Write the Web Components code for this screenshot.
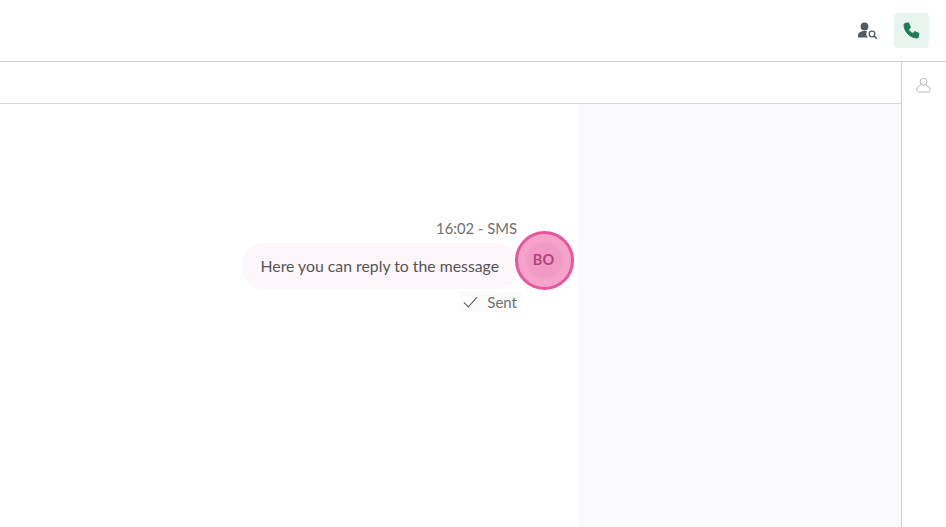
<!DOCTYPE html>
<html><head><meta charset="utf-8"><style>
html,body{margin:0;height:100%;background:#fff;overflow:hidden}
body{font-family:Lato,"Open Sans",sans-serif;color:#555}
</style></head><body>
<app-shell></app-shell>
<script>
const def=(name,html)=>{customElements.define(name,class extends HTMLElement{constructor(){super();this.attachShadow({mode:'open'}).innerHTML=html;}});};
def('top-bar',`<style>
:host{display:flex;align-items:center;justify-content:flex-end;height:62px;box-sizing:border-box;border-bottom:1px solid #d0d0d0;background:#fff;padding:0 17px 0 0;gap:16px}
.find{width:20px;height:18px;display:block}
.call{width:35px;height:35px;border-radius:4px;background:#e8f5ee;display:flex;align-items:center;justify-content:center}
</style>
<svg class="find" viewBox="0 0 20 18"><circle cx="6.500" cy="4.500" r="3.900" fill="#555a60"/><path d="M0 15.500v-2C0 10.500 3 9 6.500 9c1 0 1.800.1 2.600.3A4.800 4.800 0 0 0 10 15.500z" fill="#555a60"/><circle cx="14" cy="12" r="2.800" fill="#fff" stroke="#555a60" stroke-width="1.300"/><path d="M16 14l2.800 2.600" stroke="#555a60" stroke-width="1.500"/></svg>
<div class="call"><svg width="17" height="17" viewBox="0 0 17 17"><path d="M2 1.500 5.500.8 7.500 5.500 5.500 7.200C6.500 9.300 7.800 10.600 10 11.500L11.700 9.500 16 11.500 15.300 15C15.200 15.700 14.700 16 14 16 6.500 15.700 1.300 9.500 1 3 1 2.300 1.400 1.700 2 1.500z" fill="#1f7a54" stroke="#1f7a54" stroke-linejoin="round"/></svg></div>`);
def('sub-bar',`<style>:host{display:block;height:42px;box-sizing:border-box;border-bottom:1px solid #d6d6d6;background:#fff}</style>`);
def('side-rail',`<style>
:host{display:flex;flex-direction:column;align-items:center;width:45px;box-sizing:border-box;border-left:1px solid #d0d0d0;background:#fff;padding:15px 1px 0 0}
svg{display:block}
</style>
<svg width="15" height="16" viewBox="0 0 16 17" fill="none" stroke="#b4b4b4" stroke-width="1"><circle cx="8" cy="5" r="3.600"/><path d="M5.500 8.500C3 9.500 1 11 1 13.500c0 1.500.8 2.500 2 2.500h10c1.200 0 2-1 2-2.500 0-2.500-2-4-4.500-5"/></svg>`);
def('chat-message',`<style>
:host{display:flex;flex-direction:column;align-items:flex-end;position:relative;padding-right:62px;width:max-content}
.time{font-size:14.800px;line-height:20px;color:#6f6f6f}
.bubble{box-sizing:border-box;height:46px;margin-top:5px;padding:0 18px 2px;display:flex;align-items:center;background:#fdf6fa;border-radius:20px;font-size:15.800px;color:#555;white-space:nowrap}
.status{display:flex;align-items:center;gap:9px;margin-top:3px;height:20px;font-size:15px;color:#6f6f6f;background:#fbfbfb;padding:0 5px 0 3px;margin-right:-5px}
.avatar{position:absolute;right:5px;top:13px;width:59px;height:59px;box-sizing:border-box;border-radius:50%;border:3px solid #e8559b;background:radial-gradient(circle,#f19bc4 0 17px,#f5a3cb 20px);display:flex;align-items:center;justify-content:center;font-size:14.500px;font-weight:700;color:#b0447f;padding:0 2px 2px 0}
svg{display:block}
</style>
<div class="time"><slot name="time"></slot></div>
<div class="bubble"><slot></slot></div>
<div class="status"><svg width="15" height="12" viewBox="0 0 17 13" fill="none" stroke="#666" stroke-width="1.300"><path d="M1 7l5 5L16 1"/></svg><slot name="status"></slot></div>
<div class="avatar">BO</div>`);
def('chat-pane',`<style>
:host{display:flex;flex:1;min-height:0;background:#fafafc}
.log{width:579px;box-sizing:border-box;background:#fff;padding-top:114px;display:flex;flex-direction:column;align-items:flex-end}
</style>
<div class="log"><slot></slot></div>`);
def('app-shell',`<style>
:host{display:flex;flex-direction:column;height:527px;width:946px}
.body{display:flex;flex:1;min-height:0}
.main{flex:1;display:flex;flex-direction:column;min-width:0}
</style>
<top-bar></top-bar>
<div class="body"><div class="main"><sub-bar></sub-bar><chat-pane><chat-message><span slot="time">16:02 - SMS</span>Here you can reply to the message<span slot="status">Sent</span></chat-message></chat-pane></div><side-rail></side-rail></div>`);
</script>
</body></html>
